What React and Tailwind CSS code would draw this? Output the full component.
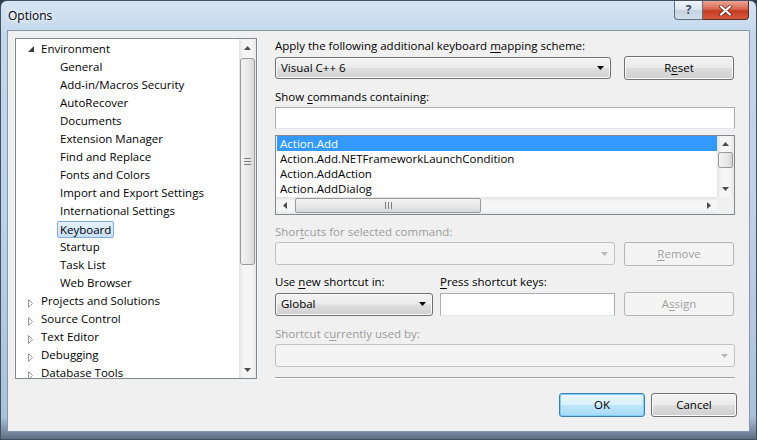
import React from "react";

const tree = [
  { t: "Environment", lvl: 0, open: true },
  { t: "General", lvl: 1 },
  { t: "Add-in/Macros Security", lvl: 1 },
  { t: "AutoRecover", lvl: 1 },
  { t: "Documents", lvl: 1 },
  { t: "Extension Manager", lvl: 1 },
  { t: "Find and Replace", lvl: 1 },
  { t: "Fonts and Colors", lvl: 1 },
  { t: "Import and Export Settings", lvl: 1 },
  { t: "International Settings", lvl: 1 },
  { t: "Keyboard", lvl: 1, sel: true },
  { t: "Startup", lvl: 1 },
  { t: "Task List", lvl: 1 },
  { t: "Web Browser", lvl: 1 },
  { t: "Projects and Solutions", lvl: 0 },
  { t: "Source Control", lvl: 0 },
  { t: "Text Editor", lvl: 0 },
  { t: "Debugging", lvl: 0 },
  { t: "Database Tools", lvl: 0 },
];

const commands = [
  "Action.Add",
  "Action.Add.NETFrameworkLaunchCondition",
  "Action.AddAction",
  "Action.AddDialog",
];

function Tri({ dir = "down", color = "#000", w = 7, h = 4 }) {
  const pts = {
    down: `0,0 ${w},0 ${w / 2},${h}`,
    up: `0,${h} ${w},${h} ${w / 2},0`,
    left: `${w},0 ${w},${h} 0,${h / 2}`,
    right: `0,0 0,${h} ${w},${h / 2}`,
  }[dir];
  return (
    <svg width={w} height={h} viewBox={`0 0 ${w} ${h}`} className="block">
      <polygon points={pts} fill={color} />
    </svg>
  );
}

function Combo({ value, className, disabled }) {
  return (
    <div
      className={
        disabled
          ? `${className} flex items-center rounded-[3px] border border-[#c2c2c2] bg-[#f4f4f4]`
          : `${className} flex items-center rounded-[3px] border border-[#707070] bg-[linear-gradient(180deg,#f3f3f3_0%,#ececec_48%,#dfdfdf_52%,#d0d0d0_100%)] shadow-[inset_0_0_0_1px_#fcfcfc]`
      }
    >
      <span className="flex-1 pl-[5px] leading-[16px]">{value}</span>
      <span className="pr-[6px]">
        <Tri color={disabled ? "#b8b8b8" : "#000"} />
      </span>
    </div>
  );
}

function Btn({ children, className, disabled, def }) {
  let look =
    "border-[#707070] bg-[linear-gradient(180deg,#f2f2f2_0%,#ebebeb_48%,#dddddd_52%,#cfcfcf_100%)] shadow-[inset_0_0_0_1px_#fbfbfb]";
  if (disabled) look = "border-[#b5b5b5] bg-[#f4f4f4] text-[#a0a0a0]";
  if (def)
    look =
      "border-[#3c7fb1] bg-[linear-gradient(180deg,#eaf6fd_0%,#d9f0fc_48%,#bee6fd_52%,#a7d9f5_100%)] shadow-[inset_0_0_0_1px_#7ecff5]";
  return (
    <div className={`${className} flex items-center justify-center rounded-[3px] border ${look}`}>
      {children}
    </div>
  );
}

function TreeView() {
  return (
    <div className="w-[242px] h-[341px] border border-[#828790] bg-white flex overflow-hidden">
      <div className="flex-1 pt-[1px] overflow-hidden">
        {tree.map((n) => (
          <div key={n.t} className="h-[18px] flex items-center relative">
            {n.lvl === 0 && (
              <span className="absolute left-[12px] top-[6px]">
                {n.open ? (
                  <svg width="6" height="6" viewBox="0 0 6 6" className="block">
                    <polygon points="6,0 6,6 0,6" fill="#3b3b3b" />
                  </svg>
                ) : (
                  <svg width="6" height="9" viewBox="0 0 6 9" className="block mt-[1px]">
                    <polygon points="0.5,0.5 4.5,4.5 0.5,8.5" fill="none" stroke="#9a9a9a" />
                  </svg>
                )}
              </span>
            )}
            {n.sel ? (
              <span className="ml-[41px] h-[17px] mt-[1px] px-[2px] flex items-center rounded-[2px] border border-[#84acdd] bg-[linear-gradient(180deg,#e6f1fd_0%,#c9e0fc_100%)] leading-[15px]">
                {n.t}
              </span>
            ) : (
              <span className={n.lvl === 0 ? "ml-[25px] leading-[18px]" : "ml-[44px] leading-[18px]"}>{n.t}</span>
            )}
          </div>
        ))}
      </div>
      {/* vertical scrollbar */}
      <div className="w-[17px] flex flex-col bg-[linear-gradient(90deg,#e3e3e3_0%,#f5f5f5_25%,#f5f5f5_75%,#e8e8e8_100%)]">
        <div className="h-[17px] flex items-center justify-center">
          <Tri dir="up" color="#4d4d4d" />
        </div>
        <div className="mt-[2px] mx-[1px] h-[207px] rounded-[3px] border border-[#9a9a9a] bg-[linear-gradient(90deg,#f3f3f3_0%,#e9e9e9_50%,#d9d9d9_100%)] flex flex-col items-center justify-center gap-[2px]">
          <div className="w-[7px] h-[1px] bg-[#7f7f7f]" />
          <div className="w-[7px] h-[1px] bg-[#7f7f7f]" />
          <div className="w-[7px] h-[1px] bg-[#7f7f7f]" />
        </div>
        <div className="flex-1" />
        <div className="h-[17px] flex items-center justify-center">
          <Tri dir="down" color="#4d4d4d" />
        </div>
      </div>
    </div>
  );
}

function CommandList() {
  return (
    <div className="mt-[6px] h-[80px] border border-[#828790] bg-white flex flex-col">
      <div className="flex h-[61px]">
        <div className="flex-1 pl-[1px]">
          {commands.map((c, i) => (
            <div
              key={c}
              className={
                i === 0
                  ? "h-[15px] leading-[15px] pl-[3px] bg-[#3399ff] text-white"
                  : "h-[15px] leading-[15px] pl-[3px]"
              }
            >
              {c}
            </div>
          ))}
        </div>
        <div className="w-[17px] flex flex-col bg-[linear-gradient(90deg,#e3e3e3_0%,#f5f5f5_25%,#f5f5f5_75%,#e8e8e8_100%)]">
          <div className="h-[16px] flex items-center justify-center">
            <Tri dir="up" color="#4d4d4d" />
          </div>
          <div className="mx-[1px] h-[16px] rounded-[2px] border border-[#9a9a9a] bg-[linear-gradient(90deg,#f3f3f3_0%,#e9e9e9_50%,#d9d9d9_100%)]" />
          <div className="flex-1" />
          <div className="h-[16px] flex items-center justify-center">
            <Tri dir="down" color="#4d4d4d" />
          </div>
        </div>
      </div>
      <div className="flex h-[17px]">
        <div className="flex-1 flex items-center bg-[linear-gradient(180deg,#e3e3e3_0%,#f5f5f5_25%,#f5f5f5_75%,#e8e8e8_100%)]">
          <div className="w-[17px] flex items-center justify-center">
            <Tri dir="left" color="#4d4d4d" w={4} h={7} />
          </div>
          <div className="ml-[2px] w-[186px] h-[15px] rounded-[2px] border border-[#9a9a9a] bg-[linear-gradient(180deg,#f3f3f3_0%,#e9e9e9_50%,#d9d9d9_100%)] flex items-center justify-center gap-[2px]">
            <div className="w-[1px] h-[7px] bg-[#7f7f7f]" />
            <div className="w-[1px] h-[7px] bg-[#7f7f7f]" />
            <div className="w-[1px] h-[7px] bg-[#7f7f7f]" />
          </div>
          <div className="flex-1" />
          <div className="w-[17px] flex items-center justify-center">
            <Tri dir="right" color="#4d4d4d" w={4} h={7} />
          </div>
        </div>
        <div className="w-[17px] bg-[#f0f0f0]" />
      </div>
    </div>
  );
}

export default function App() {
  return (
    <div className="w-[757px] h-[440px] bg-[#2f3c4b] font-['Open_Sans',sans-serif] text-[11.5px] text-black overflow-hidden">
      <div className="w-full h-full rounded-t-[7px] border border-[#44505e] bg-[linear-gradient(180deg,#d5e4f3_0%,#c3d7ec_8%,#bcd2e9_50%,#a9c1da_95%,#5d6e83_100%)] flex flex-col">
        {/* title bar */}
        <div className="h-[29px] flex items-start relative">
          <span className="pl-[7px] pt-[7px] leading-[16px] text-[12px] [text-shadow:0_0_6px_#fff,0_0_4px_#fff]">Options</span>
          <div className="ml-auto mr-[7px] flex">
            <div className="w-[29px] h-[19px] rounded-bl-[4px] border border-t-0 border-[#5f6f82] bg-[linear-gradient(180deg,#eef3f8_0%,#dde6ef_45%,#c4d2e0_55%,#d3dfea_100%)] flex items-center justify-center text-[12px] font-bold text-[#3e4a58] leading-none">
              ?
            </div>
            <div className="w-[46px] h-[19px] rounded-br-[4px] border border-l-0 border-t-0 border-[#5a2a22] bg-[linear-gradient(180deg,#eba596_0%,#d8664f_45%,#c23a1f_55%,#d65a40_100%)] flex items-center justify-center">
              <svg width="13" height="11" viewBox="0 0 13 11" className="block">
                <path d="M2 1.5 L11 9.5 M11 1.5 L2 9.5" stroke="#5a2a22" strokeWidth="3.6" strokeLinecap="round" />
                <path d="M2 1.5 L11 9.5 M11 1.5 L2 9.5" stroke="#ffffff" strokeWidth="2.2" strokeLinecap="round" />
              </svg>
            </div>
          </div>
        </div>

        {/* client area */}
        <div className="flex-1 ml-[6px] mr-[6px] mb-[7px] border border-[#8597ab] bg-[#f0f0f0] flex flex-col">
          <div className="flex pt-[7px] pl-[7px]">
            <TreeView />

            <div className="ml-[18px] w-[460px] flex flex-col">
              <div className="h-[16px] leading-[16px]">
                Apply the following additional keyboard <u className="underline-offset-2">m</u>apping scheme:
              </div>
              <div className="mt-[2px] h-[24px] flex items-center">
                <Combo value="Visual C++ 6" className="w-[336px] h-[22px]" />
                <Btn className="ml-[13px] w-[110px] h-[24px]">
                  <span>
                    R<u className="underline-offset-2">e</u>set
                  </span>
                </Btn>
              </div>

              <div className="mt-[9px] h-[16px] leading-[16px]">
                Show <u className="underline-offset-2">c</u>ommands containing:
              </div>
              <div className="mt-[2px] h-[22px] border border-[#abadb3] border-b-[#e3e9ef] bg-white" />

              <CommandList />

              <div className="mt-[9px] h-[16px] leading-[16px] text-[#9c9c9c]">
                Shor<u className="underline-offset-2">t</u>cuts for selected command:
              </div>
              <div className="mt-[2px] h-[24px] flex items-start">
                <Combo disabled value="" className="w-[340px] h-[23px]" />
                <Btn disabled className="ml-[9px] w-[110px] h-[24px]">
                  <span>
                    <u className="underline-offset-2">R</u>emove
                  </span>
                </Btn>
              </div>

              <div className="mt-[8px] h-[16px] leading-[16px] flex">
                <span className="w-[165px]">
                  Use <u className="underline-offset-2">n</u>ew shortcut in:
                </span>
                <span>
                  <u className="underline-offset-2">P</u>ress shortcut keys:
                </span>
              </div>
              <div className="mt-[2px] h-[24px] flex items-center">
                <Combo value="Global" className="w-[158px] h-[23px]" />
                <div className="ml-[7px] w-[175px] h-[23px] border border-[#abadb3] border-b-[#e3e9ef] bg-white" />
                <Btn disabled className="ml-[9px] w-[110px] h-[24px]">
                  <span>
                    A<u className="underline-offset-2">s</u>sign
                  </span>
                </Btn>
              </div>

              <div className="mt-[10px] h-[16px] leading-[16px] text-[#9c9c9c]">
                Shortcut c<u className="underline-offset-2">u</u>rrently used by:
              </div>
              <Combo disabled value="" className="mt-[2px] w-[460px] h-[23px]" />

              <div className="mt-[10px] h-[2px] border-t border-[#a0a0a0] border-b border-b-white" />

              <div className="mt-[14px] flex justify-end -mr-[2px]">
                <Btn def className="w-[86px] h-[24px]">
                  OK
                </Btn>
                <Btn className="ml-[6px] w-[86px] h-[24px]">Cancel</Btn>
              </div>
            </div>
          </div>
        </div>
      </div>
    </div>
  );
}
